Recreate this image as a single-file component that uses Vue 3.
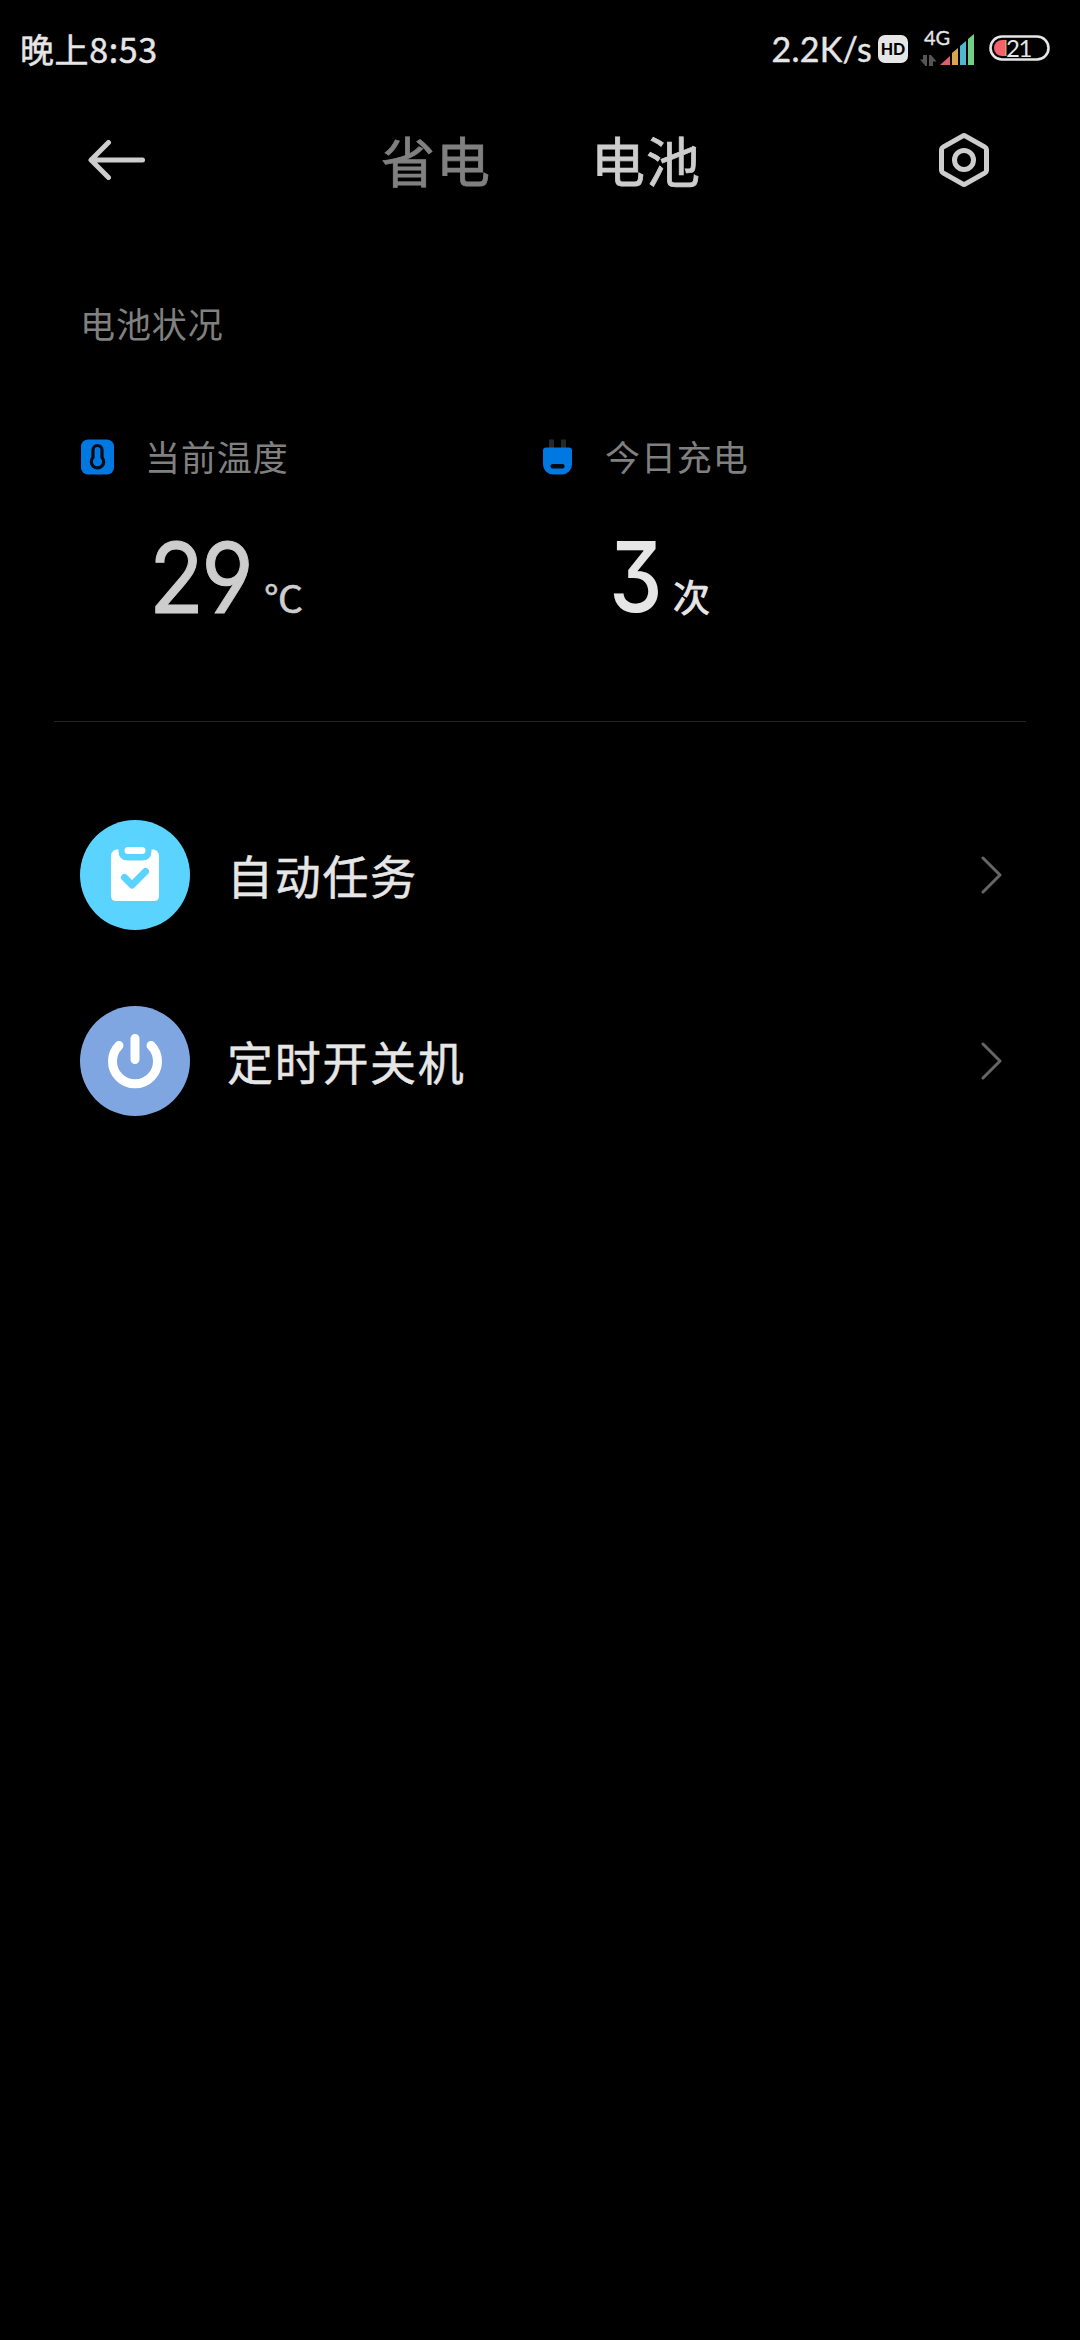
<script setup>
import { ref } from "vue";

const tabs = ["省电", "电池"];
const activeTab = ref("电池");

const items = [
  { id: "task", label: "自动任务" },
  { id: "power", label: "定时开关机" },
];
</script>

<template>
  <div class="screen">
    <div class="status">
      <span class="time">晚上8:53</span>
      <span class="speed">2.2K/s</span>
      <span class="hd">HD</span>
      <div class="signal">
        <span class="net">4G</span>
        <svg width="56" height="34" viewBox="0 0 56 34">
          <g fill="#555">
            <path d="M3 23h4v11H5.500L0 27.500h3z" />
            <path d="M9 34V23h2l5.500 6.500h-3.500V34z" />
          </g>
          <path d="M20 33l10-9v9z" fill="#d9606c" />
          <path d="M32 33V21l6-5v17z" fill="#d9a650" />
          <path d="M40 33V14l6-5v24z" fill="#4fb8d0" />
          <path d="M48 33V7l6-5v31z" fill="#72cf86" />
        </svg>
      </div>
      <div class="battery">
        <svg width="61" height="26" viewBox="0 0 61 26">
          <path d="M17 5h-4a8 8 0 0 0 0 16h4z" fill="#f5616f" />
          <path d="M16 5h1.500v16h-1.500z" fill="#e0a050" />
          <rect x="1.500" y="1.500" width="58" height="23" rx="11.500" fill="none" stroke="#e6e6e6" stroke-width="2.600" />
        </svg>
        <span class="level">21</span>
      </div>
    </div>

    <header class="header">
      <svg class="back" width="58" height="40" viewBox="0 0 58 40">
        <path d="M20.500 2.500L3 20l17.500 17.500M4 20h50.500" fill="none" stroke="#cdcdcd" stroke-width="5" stroke-linecap="round" stroke-linejoin="round" />
      </svg>
      <nav class="tabs">
        <span v-for="tab in tabs" :key="tab" :class="['tab', { active: tab === activeTab }]" @click="activeTab = tab">{{ tab }}</span>
      </nav>
      <svg class="gear" width="50" height="54" viewBox="0 0 50 54">
        <g fill="none" stroke="#cdcdcd" stroke-width="5" stroke-linejoin="round">
          <path d="M23.500 3.100Q25 2.200 26.500 3.100L46 14.200Q47.500 15 47.500 16.700V37.300Q47.500 39 46 39.800L26.500 50.900Q25 51.800 23.500 50.900L4 39.800Q2.500 39 2.500 37.300V16.700Q2.500 15 4 14.200Z" />
          <circle cx="25" cy="27" r="9.500" />
        </g>
      </svg>
    </header>

    <h2 class="section">电池状况</h2>

    <div class="stats">
      <div class="stat">
        <div class="stat-head">
          <svg width="36" height="36" viewBox="0 0 36 36">
            <rect x="1" y="0.500" width="33" height="35" rx="7" fill="#0078e2" />
            <path d="M13 11a4.500 4.500 0 0 1 9 0v7.500a6.200 6.200 0 1 1-9 0z" fill="#0078e2" stroke="#020a14" stroke-width="3.200" />
          </svg>
          <span>当前温度</span>
        </div>
        <div class="value temp"><b>29</b><i>℃</i></div>
      </div>
      <div class="stat">
        <div class="stat-head">
          <svg width="36" height="36" viewBox="0 0 36 36">
            <path d="M9 0.500h5v9H9zM21 0.500h5v9h-5z" fill="#25282c" />
            <path d="M6 8.500h23a3 3 0 0 1 3 3V25.500a10 10 0 0 1-10 10H13a10 10 0 0 1-10-10V11.500a3 3 0 0 1 3-3z" fill="#0078e2" />
            <rect x="10.500" y="25" width="14" height="4.500" rx="2" fill="#020a14" />
          </svg>
          <span>今日充电</span>
        </div>
        <div class="value charge"><b>3</b><i>次</i></div>
      </div>
    </div>

    <ul class="list">
      <li v-for="item in items" :key="item.id">
        <svg v-if="item.id === 'task'" width="110" height="110" viewBox="0 0 110 110">
          <circle cx="55" cy="55" r="55" fill="#5ad3ff" />
          <path d="M31 36q0-5 5-6.500h2.500v2q0 9 9.500 9h14q9.500 0 9.500-9v-2H74q5 1.500 5 6.500v40q0 5-5 5H36q-5 0-5-5z" fill="#fff" />
          <rect x="44.500" y="27" width="21" height="7" rx="3.500" fill="#fff" />
          <path d="M44.500 57.500l7.500 7.500 13.500-13.500" fill="none" stroke="#5ad3ff" stroke-width="7" stroke-linecap="round" stroke-linejoin="round" />
        </svg>
        <svg v-else width="110" height="110" viewBox="0 0 110 110">
          <circle cx="55" cy="55" r="55" fill="#7fa6e0" />
          <path d="M39 39.500a22.500 22.500 0 1 0 32 0M55 32.500v21" fill="none" stroke="#fff" stroke-width="9" stroke-linecap="round" />
        </svg>
        <span class="label">{{ item.label }}</span>
        <svg class="chevron" width="22" height="38" viewBox="0 0 22 38">
          <path d="M2 2l17 17L2 36" fill="none" stroke="#666" stroke-width="3" stroke-linecap="round" stroke-linejoin="round" />
        </svg>
      </li>
    </ul>
  </div>
</template>

<style>
body {
  background: #000;
}
</style>

<style scoped>
.screen {
  box-sizing: border-box;
  width: 1080px;
  height: 2340px;
  background: #000;
  color: #e6e6e6;
  font-family: "Noto Sans CJK SC", sans-serif;
  overflow: hidden;
}

.status {
  display: flex;
  align-items: center;
  height: 98px;
  padding: 0 30px 0 20px;
}

.time {
  flex: 1;
  font-size: 34px;
  letter-spacing: 0.6px;
  line-height: 50px;
  -webkit-text-stroke: 0.5px;
}

.speed {
  padding-bottom: 1px;
  font-family: Lato, sans-serif;
  font-size: 34px;
  letter-spacing: 0.3px;
  -webkit-text-stroke: 0.4px;
}

.hd {
  width: 30px;
  height: 28px;
  margin-left: 6px;
  border-radius: 7px;
  background: #e6e6e6;
  color: #000;
  font: 900 16px/28px Lato, sans-serif;
  text-align: center;
}

.signal {
  position: relative;
  height: 34px;
  margin-left: 12px;
}

.signal svg {
  display: block;
}

.net {
  position: absolute;
  left: 4px;
  top: -7px;
  font: 20px/24px Lato, sans-serif;
  -webkit-text-stroke: 0.3px;
}

.battery {
  position: relative;
  height: 26px;
  margin-left: 13px;
  padding-bottom: 2px;
}

.battery svg {
  display: block;
}

.level {
  position: absolute;
  left: 17px;
  top: 0;
  font: 24px/26px Lato, sans-serif;
  letter-spacing: -1.5px;
}

.header {
  display: flex;
  align-items: center;
  height: 124px;
  padding: 0 91px 0 88px;
}

.tabs {
  display: flex;
  flex: 1;
  gap: 100px;
  margin-left: 235px;
}

.tab {
  color: #808080;
  font-size: 54px;
  letter-spacing: 1px;
  line-height: 80px;
  -webkit-text-stroke: 0.8px;
}

.tab.active {
  color: #cdcdcd;
}

.section {
  margin: 76px 0 0 80px;
  color: #808080;
  font-size: 35px;
  font-weight: 400;
  letter-spacing: 0.9px;
  line-height: 50px;
}

.stats {
  display: flex;
  height: 289px;
  margin: 0 54px;
  padding: 84px 26px 0;
  border-bottom: 1px solid #242424;
}

.stat {
  width: 460px;
}

.stat-head {
  display: flex;
  align-items: center;
  gap: 29px;
  height: 50px;
  color: #808080;
  font-size: 35px;
  letter-spacing: 0.9px;
}

.stat-head span {
  padding-bottom: 3px;
}

.value {
  display: flex;
  align-items: baseline;
  margin-top: 35px;
  padding-left: 69px;
}

.value b {
  width: 116px;
  font: 500 98px/120px Inter, sans-serif;
  font-feature-settings: "cv09", "cv04";
  letter-spacing: -4px;
  transform: scaleX(0.87);
  transform-origin: left;
}

.value i {
  font-size: 37px;
  font-style: normal;
  font-weight: 400;
  line-height: 50px;
}

.temp {
  padding-top: 1px;
  color: #cdcdcd;
}

.temp b {
  font-weight: 400;
  letter-spacing: -3px;
  transform: scaleX(0.92);
  -webkit-text-stroke: 1px;
}

.temp i {
  transform: scaleX(1.06);
  -webkit-text-stroke: 0.5px;
}

.charge b {
  width: 64px;
}

.charge i {
  -webkit-text-stroke: 0.9px;
}

.list {
  margin: 0;
  padding: 98px 77px 0 80px;
  list-style: none;
}

.list li {
  display: flex;
  align-items: center;
  height: 110px;
  margin-bottom: 76px;
}

.label {
  flex: 1;
  margin-left: 37px;
  padding-bottom: 3px;
  font-size: 46px;
  letter-spacing: 1.7px;
  -webkit-text-stroke: 0.5px;
}
</style>
